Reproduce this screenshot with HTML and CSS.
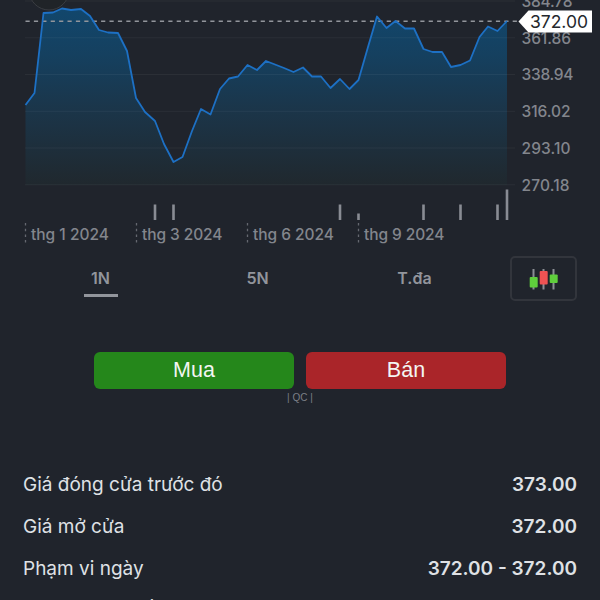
FILE: index.html
```html
<!DOCTYPE html>
<html lang="vi">
<head>
    <meta charset="UTF-8">
    <meta name="viewport" content="width=device-width, initial-scale=1.0">
    <title>372.00</title>
    <link rel="stylesheet" href="styles.css">
</head>
<body>
    <!-- Price chart -->
    <svg class="chart" width="600" height="250" viewBox="0 0 600 250">
        <defs>
            <linearGradient id="areaFill" gradientUnits="userSpaceOnUse" x1="0" y1="0" x2="0" y2="185">
                <stop offset="0" stop-color="#11486f"/>
                <stop offset="0.3" stop-color="#15405f"/>
                <stop offset="0.6" stop-color="#1b3549"/>
                <stop offset="1" stop-color="#20282e"/>
            </linearGradient>
        </defs>
        <path fill="url(#areaFill)" d="M25.5 185V105L34.5 93L43.5 13L53 12.5L62 8.5L71 10L81 9L90 16L99 30L108 32.5L118 33L127 51L136 98L145 112L155 121L164 144L173.5 162L182.5 157L192 131L201 109L210.5 114.5L220 89L229 78.5L238 76.5L247.5 65L257 70L266 61L275 64.5L284 68L293.5 72L303 67.5L312 76.5L321 76.5L330.5 88L340 79L349.5 89L358.5 80L368 47L377 16.5L386.5 28L395.5 21L405 28.5L414 28.5L423.5 49L432.5 52L442 52L451 67L460.5 65L470 60.5L479.5 37L488 26.5L497.5 31L507 21V185Z"/>
        <path class="grid" d="M25 1H515M25 37.8H515M25 74.5H515M25 111.3H515M25 148H515M25 184.8H515"/>
        <path class="current" d="M25.5 21.3H520"/>
        <path class="line" d="M25.5 105L34.5 93L43.5 13L53 12.5L62 8.5L71 10L81 9L90 16L99 30L108 32.5L118 33L127 51L136 98L145 112L155 121L164 144L173.5 162L182.5 157L192 131L201 109L210.5 114.5L220 89L229 78.5L238 76.5L247.5 65L257 70L266 61L275 64.5L284 68L293.5 72L303 67.5L312 76.5L321 76.5L330.5 88L340 79L349.5 89L358.5 80L368 47L377 16.5L386.5 28L395.5 21L405 28.5L414 28.5L423.5 49L432.5 52L442 52L451 67L460.5 65L470 60.5L479.5 37L488 26.5L497.5 31L507 21"/>
        <circle class="ring" cx="49" cy="-10" r="20"/>
        <!-- Volume -->
        <path class="volume" d="M155 204.5V220M173.5 204.5V220M340 204.5V220M358.5 213.5V220M423.5 204.5V220M460.5 204.5V220M497.5 204.5V220M507 189.5V220"/>
        <path class="tick" d="M25.5 223V243M136.5 223V243M247.5 223V243M358.5 223V243"/>
        <g class="axis">
            <text x="521.5" y="6.5" textLength="51">384.78</text>
            <text x="521.5" y="43.5" textLength="49.5">361.86</text>
            <text x="521.5" y="80" textLength="52">338.94</text>
            <text x="521.5" y="117" textLength="49">316.02</text>
            <text x="521.5" y="153.7" textLength="49">293.10</text>
            <text x="521.5" y="190.5" textLength="48">270.18</text>
        </g>
        <g class="axis dates">
            <text x="31" y="240" textLength="78">thg 1 2024</text>
            <text x="142" y="240" textLength="80.5">thg 3 2024</text>
            <text x="253" y="240" textLength="81">thg 6 2024</text>
            <text x="364" y="240" textLength="80.5">thg 9 2024</text>
        </g>
        <path fill="#fff" d="M518.5 21.5L528.5 10.5H592V32.5H528.5Z"/>
        <text class="price" x="530" y="27.5" textLength="58">372.00</text>
    </svg>

    <div class="periods">
        <span class="period active">1N</span>
        <span class="period">5N</span>
        <span class="period">T.đa</span>
        <button class="chart-type" aria-label="Candlestick">
            <svg width="30" height="22" viewBox="0 0 30 22">
                <path d="M5.5 1V21.5M15.5 1V21.5M25.5 1V21.5" stroke="#8a8d94" stroke-width="2"/>
                <rect x="1.7" y="9" width="8" height="10.5" rx="1" fill="#5fce3c"/>
                <rect x="11.7" y="3" width="8" height="13.5" rx="1" fill="#ee5253"/>
                <rect x="21.7" y="6.5" width="8" height="8.5" rx="1" fill="#5fce3c"/>
            </svg>
        </button>
    </div>

    <div class="actions">
        <button class="buy">Mua</button>
        <button class="sell">Bán</button>
    </div>
    <div class="ad-label">| QC |</div>

    <div class="details">
        <div class="row"><span>Giá đóng cửa trước đó</span><b>373.00</b></div>
        <div class="row"><span>Giá mở cửa</span><b>372.00</b></div>
        <div class="row"><span>Phạm vi ngày</span><b>372.00 - 372.00</b></div>
        <div class="row"><span>Phạm vi 52 tuần</span></div>
    </div>
</body>
</html>
```
FILE: styles.css
```css
body {
    margin: 0;
    height: 600px;
    overflow: hidden;
    background-color: #20242c;
    color: #dfe1e5;
    font-family: Inter, "Liberation Sans", sans-serif;
}

button {
    padding: 0;
    border: none;
    font-family: inherit;
}

/* Chart */
.chart {
    display: block;
}

.ring {
    fill: #202428;
    stroke: #3a3d42;
}

.grid {
    stroke: #fff;
    stroke-opacity: 0.05;
}

.current {
    stroke: #92959b;
    stroke-width: 1.5;
    stroke-dasharray: 4.2 4.2;
}

.line {
    fill: none;
    stroke: #1d70c4;
    stroke-width: 1.8;
    stroke-linejoin: round;
}

.volume {
    stroke: #898c94;
    stroke-width: 2.6;
}

.tick {
    stroke: #656870;
    stroke-width: 1.3;
    stroke-dasharray: 2.5 3.2;
}

.axis {
    fill: #83868d;
    font-size: 15.5px;
    font-weight: 500;
}

.price {
    fill: #24272c;
    font-size: 17.5px;
}

/* Period tabs */
.periods {
    display: grid;
    grid-template-columns: 157px 157px 157px 67px;
    align-items: center;
    height: 58px;
    padding-left: 22px;
}

.period {
    justify-self: center;
    box-sizing: border-box;
    min-width: 34px;
    height: 29px;
    margin-top: 7px;
    line-height: 21px;
    text-align: center;
    font-size: 16px;
    font-weight: 600;
    color: #92959c;
    border-bottom: 3px solid transparent;
}

.active {
    border-color: #92959c;
}

.chart-type {
    display: flex;
    justify-content: center;
    align-items: center;
    box-sizing: border-box;
    width: 67px;
    height: 45px;
    margin: 0 0 1px 17px;
    padding-right: 2px;
    border: 2px solid #32353c;
    border-radius: 5px;
    background: none;
}

/* Buy and sell */
.actions {
    display: flex;
    gap: 12px;
    padding: 44px 94px 0;
}

.actions button {
    flex: 1;
    height: 37px;
    border-radius: 6px;
    color: #f3f5f3;
    font-family: "Liberation Sans", Arial, sans-serif;
    font-size: 21.5px;
}

.actions .buy {
    background-color: #25871b;
}

.actions .sell {
    background-color: #aa2529;
}

.ad-label {
    height: 18px;
    line-height: 18px;
    text-align: center;
    color: #7c7f86;
    font-family: "Liberation Sans", Arial, sans-serif;
    font-size: 10px;
}

/* Details */
.details {
    padding: 57px 23px 0;
}

.row {
    display: flex;
    justify-content: space-between;
    height: 42px;
    line-height: 42px;
    font-size: 19px;
}

.row b {
    font-weight: 600;
}
```
